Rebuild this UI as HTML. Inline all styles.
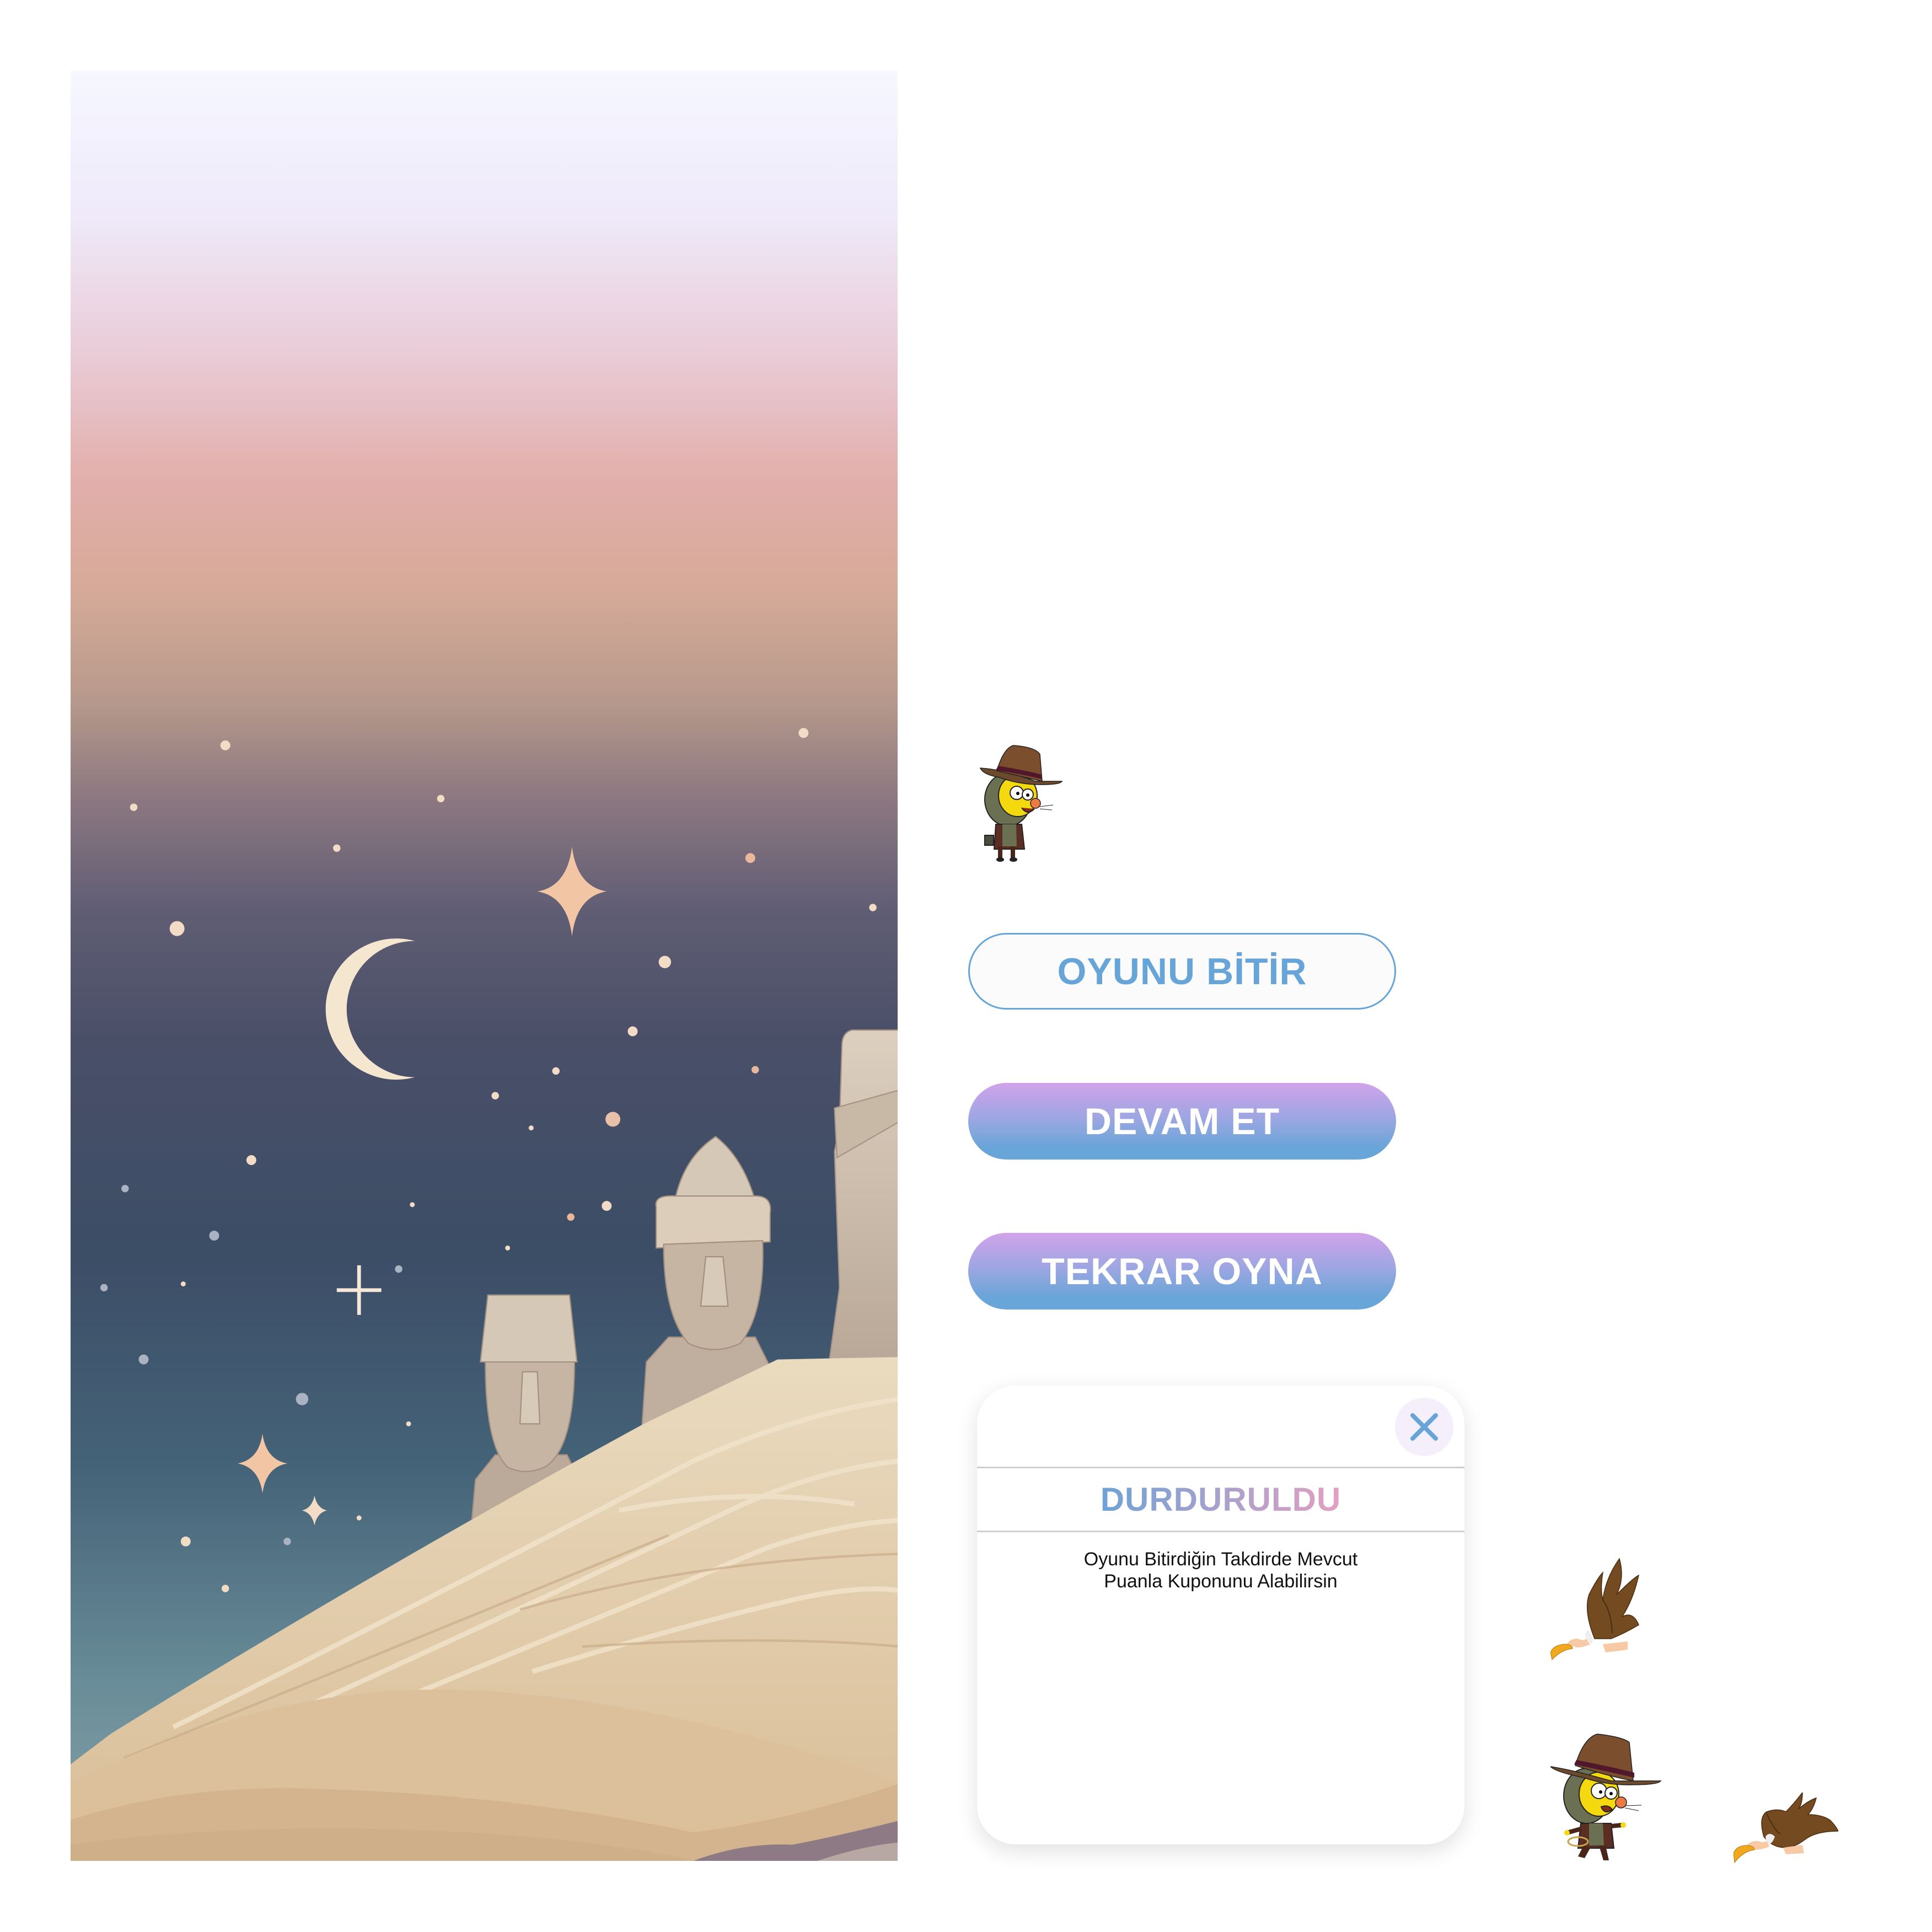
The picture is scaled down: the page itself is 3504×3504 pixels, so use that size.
<!DOCTYPE html>
<html><head><meta charset="utf-8"><style>
html,body{margin:0;padding:0;background:#fff;width:3504px;height:3504px;overflow:hidden;position:relative;font-family:"Liberation Sans",sans-serif}
.abs{position:absolute}
.btn{position:absolute;left:1756px;width:776px;height:139px;border-radius:70px;box-sizing:border-box;display:flex;align-items:center;justify-content:center;font-weight:bold;font-size:68px;letter-spacing:1px}
.b1{top:1692px;background:#fbfbfb;border:3px solid #67a5d8;color:#67a5d8}
.g{background:linear-gradient(#d1a3ea,#9ea6e2 45%,#68a5d8 85%);color:#fff}
.modal{position:absolute;left:1772px;top:2513px;width:884px;height:832px;background:#fff;border-radius:70px;box-shadow:0 12px 40px rgba(0,0,0,.12)}
.hr{position:absolute;left:0;width:884px;height:3px;background:#cfcfcf}
.title{position:absolute;left:0;width:884px;top:172px;text-align:center;font-weight:bold;font-size:60px;letter-spacing:1px}
.title span{background:linear-gradient(90deg,#6ea2d6,#e4a0c2);-webkit-background-clip:text;background-clip:text;color:transparent}
.txt{position:absolute;left:0;width:884px;top:295px;text-align:center;font-size:34px;line-height:40px;color:#111}
.close{position:absolute;left:758px;top:22px;width:106px;height:106px;border-radius:50%;background:#f5eefb}
</style></head><body>

<svg class="abs" style="left:128px;top:128px" width="1500" height="3247" viewBox="57 57 668 1446" preserveAspectRatio="none">
<defs>
<linearGradient id="sky" x1="0" y1="57" x2="0" y2="1503" gradientUnits="userSpaceOnUse">
<stop offset="0" stop-color="#f6f7ff"/>
<stop offset="0.08" stop-color="#efeafa"/>
<stop offset="0.16" stop-color="#e9cbd6"/>
<stop offset="0.23" stop-color="#e2aeaa"/>
<stop offset="0.29" stop-color="#d6aa98"/>
<stop offset="0.35" stop-color="#b89a8c"/>
<stop offset="0.41" stop-color="#8a7680"/>
<stop offset="0.47" stop-color="#5f5d74"/>
<stop offset="0.54" stop-color="#4a4f68"/>
<stop offset="0.66" stop-color="#3c4d66"/>
<stop offset="0.78" stop-color="#456378"/>
<stop offset="0.90" stop-color="#688c98"/>
<stop offset="1" stop-color="#8aa4a8"/>
</linearGradient>
<linearGradient id="sand" x1="0" y1="1095" x2="0" y2="1503" gradientUnits="userSpaceOnUse">
<stop offset="0" stop-color="#eadbbf"/><stop offset="1" stop-color="#d9bd97"/>
</linearGradient>
<linearGradient id="stone" x1="0" y1="0" x2="0" y2="1" >
<stop offset="0" stop-color="#ddd0bf"/><stop offset="1" stop-color="#b9a898"/>
</linearGradient>
</defs>
<rect x="57" y="57" width="668" height="1446" fill="url(#sky)"/>
<g fill="#f3dcc6">
<circle cx="182" cy="602" r="4"/><circle cx="108" cy="652" r="3"/><circle cx="356" cy="645" r="3"/><circle cx="272" cy="685" r="3"/>
<circle cx="649" cy="592" r="4"/><circle cx="606" cy="693" r="4" fill="#e9b89a"/><circle cx="705" cy="733" r="3"/><circle cx="143" cy="750" r="6"/>
<circle cx="537" cy="777" r="5"/><circle cx="511" cy="833" r="4"/><circle cx="610" cy="864" r="3" fill="#e9b89a"/><circle cx="449" cy="865" r="3"/>
<circle cx="400" cy="885" r="3"/><circle cx="429" cy="911" r="2"/><circle cx="495" cy="904" r="6" fill="#e9c0a8"/><circle cx="203" cy="937" r="4"/>
<circle cx="101" cy="960" r="3" fill="#a9b3c4"/><circle cx="490" cy="974" r="4"/><circle cx="461" cy="983" r="3" fill="#e9b89a"/><circle cx="173" cy="998" r="4" fill="#a9b3c4"/>
<circle cx="333" cy="973" r="2"/><circle cx="322" cy="1025" r="3" fill="#a9b3c4"/><circle cx="148" cy="1037" r="2"/><circle cx="84" cy="1040" r="3" fill="#a9b3c4"/>
<circle cx="116" cy="1098" r="4" fill="#a9b3c4"/><circle cx="244" cy="1130" r="5" fill="#a9b3c4"/><circle cx="330" cy="1150" r="2"/><circle cx="150" cy="1245" r="4"/>
<circle cx="182" cy="1283" r="3"/><circle cx="290" cy="1226" r="2"/><circle cx="232" cy="1245" r="3" fill="#a9b3c4"/><circle cx="410" cy="1008" r="2"/>
</g>
<path d="M462 684 Q466 716 490 720 Q466 724 462 756 Q458 724 434 720 Q458 716 462 684Z" fill="#f2c6a4"/>
<path d="M212 1158 Q215 1179 232 1182 Q215 1185 212 1206 Q209 1185 192 1182 Q209 1179 212 1158Z" fill="#f2c6a4"/>
<path d="M254 1208 Q256 1218 264 1220 Q256 1222 254 1232 Q252 1222 244 1220 Q252 1218 254 1208Z" fill="#f2dcc6"/>
<path d="M290 1022 V1062 M272 1042 H308" stroke="#f5e8d8" stroke-width="3"/>
<path d="M335 760 A57 57 0 1 0 335 870 A47 47 0 1 1 335 760Z" fill="#f4e6cf"/>
<g fill="url(#stone)" stroke="#a89484" stroke-width="1">
<path d="M728 832 L688 832 Q680 834 680 845 L678 910 L674 930 L678 1040 L670 1098 L728 1098Z"/>
<path d="M674 895 L728 880 L728 905 L676 935Z" fill="#c8b8a6"/>
</g>
<g stroke="#a39080" stroke-width="1">
<path d="M518 1160 L522 1100 L540 1080 L610 1080 L625 1110 L622 1150Z" fill="#c0ae9e"/>
<path d="M578 918 Q552 935 545 970 L610 970 Q600 935 578 918Z" fill="#d6c8b6"/>
<path d="M530 975 Q528 965 545 966 L610 966 Q624 966 622 980 L622 1003 L530 1008Z" fill="#dccdba"/>
<path d="M536 1005 L616 1002 Q618 1060 598 1085 Q577 1095 556 1085 Q536 1062 536 1005Z" fill="#c6b5a3"/>
<path d="M570 1015 L584 1015 L588 1055 L566 1055Z" fill="#d8cab8"/>
</g>
<g stroke="#a39080" stroke-width="1">
<path d="M380 1240 L384 1195 L400 1175 L458 1175 L470 1200 L468 1215Z" fill="#bba999"/>
<path d="M394 1046 L460 1046 L466 1100 L388 1100Z" fill="#d6c8b6"/>
<path d="M392 1100 L464 1100 Q464 1170 440 1185 Q424 1192 410 1185 Q392 1168 392 1100Z" fill="#c6b5a3"/>
<path d="M422 1108 L434 1108 L436 1150 L420 1150Z" fill="#d8cab8"/>
</g>
<path d="M57 1425 L90 1400 Q300 1270 520 1150 L628 1098 L728 1096 L728 1503 L57 1503Z" fill="url(#sand)"/>
<g fill="none" stroke="#f1e4cc" stroke-width="4" opacity="0.8">
<path d="M140 1395 Q350 1290 560 1180 Q650 1140 728 1130"/>
<path d="M200 1400 Q420 1300 600 1215 Q670 1185 728 1180"/>
<path d="M330 1370 Q500 1300 620 1250 Q680 1230 728 1228"/>
<path d="M430 1350 Q560 1310 650 1290 Q700 1280 728 1285"/>
<path d="M500 1220 Q600 1200 690 1215"/>
</g>
<g fill="none" stroke="#c9ad8a" stroke-width="2" opacity="0.7">
<path d="M100 1420 Q320 1330 540 1240"/>
<path d="M420 1300 Q560 1260 728 1255"/>
<path d="M470 1330 Q620 1320 728 1330"/>
</g>
<path d="M57 1440 Q200 1370 330 1365 Q500 1360 728 1440 L728 1503 L57 1503Z" fill="#dcc09c"/>
<path d="M57 1470 Q150 1440 260 1445 Q420 1450 560 1480 Q640 1470 728 1440 L728 1503 L57 1503Z" fill="#d4b38f"/>
<path d="M57 1490 Q200 1470 380 1480 Q500 1488 560 1503 L57 1503Z" fill="#cfae8a"/>
<path d="M560 1503 Q600 1488 640 1490 Q690 1480 728 1470 L728 1503Z" fill="#8e7a84"/>
<path d="M660 1503 Q700 1490 728 1488 L728 1503Z" fill="#b8a8a4"/>
</svg>

<svg class="abs" style="left:1758px;top:1335px" width="190" height="230" viewBox="0 0 190 230">
<ellipse cx="70" cy="115" rx="42" ry="48" fill="#6b7052" stroke="#222" stroke-width="2"/>
<path d="M48 160 L95 160 L100 205 L45 205Z" fill="#5a2e22" stroke="#222" stroke-width="2"/>
<path d="M60 160 L85 160 L86 200 L60 200Z" fill="#6b7052"/>
<rect x="52" y="200" width="8" height="22" fill="#4a261a"/><rect x="75" y="200" width="8" height="22" fill="#4a261a"/>
<ellipse cx="56" cy="224" rx="7" ry="4" fill="#222"/><ellipse cx="80" cy="224" rx="7" ry="4" fill="#222"/>
<rect x="28" y="180" width="16" height="18" fill="#4b4c3c" stroke="#222" stroke-width="2"/>
<ellipse cx="88" cy="108" rx="35" ry="38" fill="#f5d90f" stroke="#222" stroke-width="2"/>
<circle cx="86" cy="103" r="12" fill="#fff" stroke="#222" stroke-width="2"/><circle cx="106" cy="106" r="10" fill="#fff" stroke="#222" stroke-width="2"/>
<circle cx="88" cy="104" r="3"/><circle cx="106" cy="107" r="3"/>
<circle cx="120" cy="122" r="9" fill="#ec7a45" stroke="#222" stroke-width="1.5"/>
<path d="M95 130 Q105 145 118 132" fill="#8a2a1a" stroke="#222" stroke-width="2"/>
<path d="M128 128 L152 125 M128 132 L150 134" stroke="#222" stroke-width="1"/>
<path d="M20 58 Q60 60 120 82 Q150 82 168 82 Q165 88 130 88 Q90 88 55 75 Q25 70 20 58Z" fill="#6e4a2c" stroke="#222" stroke-width="1.5"/>
<path d="M50 63 Q62 22 80 17 Q120 20 128 33 L132 82 Q90 72 50 63Z" fill="#7b4f2e" stroke="#222" stroke-width="1.5"/>
<path d="M48 62 Q90 68 132 78 L132 70 Q92 60 52 54Z" fill="#50182a"/>
</svg>

<svg class="abs" style="left:2812px;top:2822px" width="170" height="190" viewBox="0 0 170 190">
<path d="M80 150 Q60 100 70 70 Q85 40 95 30 Q90 60 95 80 Q100 40 125 5 Q135 40 120 70 Q150 40 160 35 Q150 80 130 110 Q150 100 160 125 Q135 140 110 150Z" fill="#744a20" stroke="#4a2c10" stroke-width="1.5"/>
<path d="M95 80 Q110 100 112 140" stroke="#4a2c10" stroke-width="2" fill="none"/>
<path d="M65 150 Q60 140 68 135 Q80 148 75 160Z" fill="#eee"/>
<path d="M30 160 Q35 150 50 150 Q60 155 65 150 L72 160 Q60 166 48 166Z" fill="#f7c9a4"/>
<path d="M0 175 Q5 162 25 160 Q40 160 40 168 Q20 170 3 188Z" fill="#f0a820" stroke="#b87a10" stroke-width="1"/>
<path d="M95 160 L140 155 L140 170 L100 175Z" fill="#f7c9a4"/>
</svg>

<svg class="abs" style="left:2812px;top:3142px" width="205" height="240" viewBox="0 0 205 240">
<ellipse cx="66" cy="115" rx="42" ry="50" fill="#6b7052" stroke="#222" stroke-width="2"/>
<path d="M55 165 L110 165 L115 210 L50 210Z" fill="#5a2e22" stroke="#222" stroke-width="2"/>
<path d="M70 165 L95 165 L97 205 L70 205Z" fill="#6b7052"/>
<path d="M60 205 L50 225 L62 228 L72 210Z" fill="#4a261a"/><path d="M88 205 L96 232 L106 232 L100 205Z" fill="#4a261a"/>
<ellipse cx="50" cy="198" rx="18" ry="8" fill="none" stroke="#c9a24a" stroke-width="3"/>
<path d="M30 182 L55 175 M110 170 L130 168" stroke="#4a261a" stroke-width="8"/>
<circle cx="30" cy="182" r="5" fill="#f5d90f"/><circle cx="132" cy="168" r="5" fill="#f5d90f"/>
<ellipse cx="88" cy="112" rx="36" ry="40" fill="#f5d90f" stroke="#222" stroke-width="2"/>
<circle cx="88" cy="106" r="14" fill="#fff" stroke="#222" stroke-width="2"/><circle cx="110" cy="110" r="11" fill="#fff" stroke="#222" stroke-width="2"/>
<circle cx="91" cy="108" r="3"/><circle cx="110" cy="111" r="3"/>
<circle cx="128" cy="127" r="10" fill="#ec7a45" stroke="#222" stroke-width="1.5"/>
<path d="M92 135 Q98 150 112 140 Q105 130 92 135Z" fill="#8a2a1a" stroke="#222" stroke-width="2"/>
<path d="M135 133 L165 132 M135 137 L160 142" stroke="#222" stroke-width="1"/>
<path d="M0 62 Q40 68 110 88 Q150 88 200 88 Q195 95 150 95 Q100 96 60 82 Q10 72 0 62Z" fill="#6e4a2c" stroke="#222" stroke-width="1.5"/>
<path d="M45 60 Q60 10 85 3 Q130 8 143 18 L150 88 Q100 78 45 60Z" fill="#7b4f2e" stroke="#222" stroke-width="1.5"/>
<path d="M43 58 Q100 70 152 82 L152 73 Q100 60 47 50Z" fill="#50182a"/>
</svg>

<svg class="abs" style="left:3144px;top:3251px" width="190" height="130" viewBox="0 0 190 130">
<path d="M55 80 Q45 45 60 35 Q80 28 95 35 Q110 20 125 0 Q125 20 118 30 Q135 15 150 10 Q145 30 135 40 Q160 40 175 50 Q185 60 190 70 Q150 70 130 85 Q110 100 95 100 Q70 100 55 80Z" fill="#744a20" stroke="#4a2c10" stroke-width="1.5"/>
<path d="M60 38 Q75 70 85 75" stroke="#4a2c10" stroke-width="2" fill="none"/>
<path d="M58 80 Q65 70 75 80 Q70 95 60 95Z" fill="#eee"/>
<path d="M22 98 Q30 87 45 88 Q55 92 60 88 L65 98 Q50 104 40 104Z" fill="#f7c9a4"/>
<path d="M0 110 Q5 97 22 96 Q38 96 38 104 Q18 106 2 127Z" fill="#f0a820" stroke="#b87a10" stroke-width="1"/>
<path d="M90 100 L125 95 L128 110 L95 112Z" fill="#f7c9a4"/>
</svg>

<div class="btn b1">OYUNU BİTİR</div>
<div class="btn g" style="top:1964px">DEVAM ET</div>
<div class="btn g" style="top:2236px">TEKRAR OYNA</div>

<div class="modal">
  <div class="close"><svg width="106" height="106" viewBox="0 0 106 106"><path d="M32 32 L74 74 M74 32 L32 74" stroke="#67a5d8" stroke-width="8" stroke-linecap="round"/></svg></div>
  <div class="hr" style="top:147px"></div>
  <div class="title"><span>DURDURULDU</span></div>
  <div class="hr" style="top:263px"></div>
  <div class="txt">Oyunu Bitirdiğin Takdirde Mevcut<br>Puanla Kuponunu Alabilirsin</div>
</div>
</body></html>
